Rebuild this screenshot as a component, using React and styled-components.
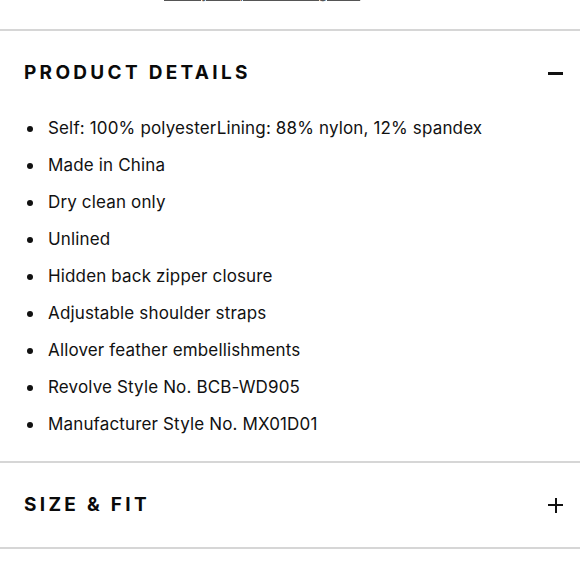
import React, { useState } from 'react';
import styled, { createGlobalStyle } from 'styled-components';

const GlobalStyles = createGlobalStyle`
  html, body {
    margin: 0;
    padding: 0;
    background: #ffffff;
    overflow: hidden;
  }
  body {
    font-family: Inter, "Noto Sans", sans-serif;
    color: #111111;
  }
`;

const Page = styled.div`
  width: 580px;
  height: 580px;
  overflow: hidden;
  display: flex;
  flex-direction: column;
`;

const GuideRow = styled.div`
  height: 29px;
  display: flex;
  justify-content: flex-start;
  align-items: flex-end;
  padding-left: 164px;
  overflow: hidden;
`;

const GuideLink = styled.a`
  font-size: 16px;
  line-height: 22px;
  color: #555555;
  white-space: nowrap;
  text-decoration: underline;
  text-decoration-thickness: 1px;
  text-underline-offset: 2px;
  margin-bottom: 26px;
`;

const Section = styled.section`
  border-top: 2px solid #d6d6d6;
  ${(p) => (p.last ? 'border-bottom: 2px solid #d6d6d6;' : '')}
`;

const Header = styled.button`
  width: 100%;
  display: flex;
  align-items: center;
  justify-content: space-between;
  background: none;
  border: none;
  padding: ${(p) => (p.open ? '30px 17px 18px 24px' : '30px 17px 30px 24px')};
  cursor: pointer;
  font-family: inherit;
  color: #0a0a0a;
`;

const Title = styled.span`
  font-size: 19px;
  line-height: 24px;
  font-weight: 700;
  letter-spacing: 3.3px;
  text-transform: uppercase;
`;

const Toggle = styled.span`
  position: relative;
  width: 15px;
  height: 15px;
  display: inline-block;

  &::before,
  &::after {
    content: '';
    position: absolute;
    background: #111111;
  }
  &::before {
    left: 0;
    right: 0;
    top: 6px;
    height: ${(p) => (p.open ? '3px' : '2px')};
  }
  &::after {
    top: 0;
    bottom: 0;
    left: 6.5px;
    width: 2px;
    display: ${(p) => (p.open ? 'none' : 'block')};
  }
`;

const List = styled.ul`
  margin: 0;
  padding: 7px 0 18px 48px;
  list-style: none;
`;

const Item = styled.li`
  position: relative;
  font-size: 17px;
  line-height: 37px;
  letter-spacing: 0.15px;
  color: #111111;

  &::before {
    content: '';
    position: absolute;
    left: -21px;
    top: 16px;
    width: 6px;
    height: 6px;
    border-radius: 50%;
    background: #111111;
  }
`;

const details = [
  'Self: 100% polyesterLining: 88% nylon, 12% spandex',
  'Made in China',
  'Dry clean only',
  'Unlined',
  'Hidden back zipper closure',
  'Adjustable shoulder straps',
  'Allover feather embellishments',
  'Revolve Style No. BCB-WD905',
  'Manufacturer Style No. MX01D01',
];

function Accordion({ title, items, defaultOpen, last }) {
  const [open, setOpen] = useState(defaultOpen);
  return (
    <Section last={last}>
      <Header open={open} onClick={() => setOpen(!open)}>
        <Title>{title}</Title>
        <Toggle open={open} />
      </Header>
      {open && items && (
        <List>
          {items.map((text) => (
            <Item key={text}>{text}</Item>
          ))}
        </List>
      )}
    </Section>
  );
}

export default function App() {
  return (
    <>
      <GlobalStyles />
      <Page>
        <GuideRow>
          <GuideLink href="#">Find your perfect fit guide</GuideLink>
        </GuideRow>
        <Accordion title="Product Details" items={details} defaultOpen />
        <Accordion title="Size & Fit" defaultOpen={false} last />
      </Page>
    </>
  );
}
